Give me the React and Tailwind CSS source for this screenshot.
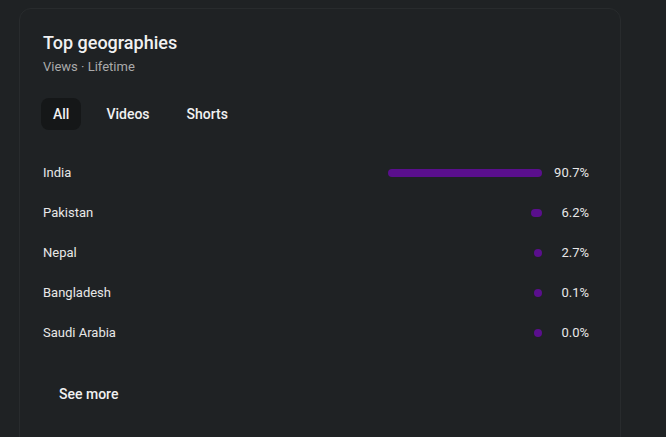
import React from 'react';

const rows = [
  { name: 'India', pct: 90.7 },
  { name: 'Pakistan', pct: 6.2 },
  { name: 'Nepal', pct: 2.7 },
  { name: 'Bangladesh', pct: 0.1 },
  { name: 'Saudi Arabia', pct: 0.0 },
];

export default function App() {
  return (
    <div className="min-h-screen w-full bg-[#1f2224] pt-2 pl-[19px]" style={{ fontFamily: 'Roboto, "Noto Sans", sans-serif' }}>
      <div className="w-[602px] h-[440px] rounded-xl border border-[#282b2d] bg-[#1f2224] pl-[23px] pr-[31px] pt-[22px]">
        {/* Header */}
        <h2 className="text-[18px] leading-6 font-medium text-[#f1f1f1]">Top geographies</h2>
        <p className="mt-0.5 text-[13px] leading-5 text-[#aaaaaa]">Views · Lifetime</p>

        {/* Tabs */}
        <div className="mt-[21px] flex items-center -ml-0.5">
          <button className="h-8 px-3 rounded-lg bg-[#151718] text-[14px] font-medium text-[#f1f1f1]">All</button>
          <button className="h-8 px-3 ml-[13px] text-[14px] font-medium text-[#f1f1f1]">Videos</button>
          <button className="h-8 px-3 ml-[13px] text-[14px] font-medium text-[#f1f1f1]">Shorts</button>
        </div>

        {/* Rows */}
        <div className="mt-[23px] flex flex-col">
          {rows.map((r) => (
            <div key={r.name} className="h-10 flex items-center">
              <span className="flex-1 text-[13px] text-[#e8e8e8]">{r.name}</span>
              <div className="w-[170px] flex justify-end items-center">
                <div
                  className="h-2 rounded-full bg-[#5a0f8d]"
                  style={{ width: Math.max(8, (r.pct * 170) / 100) }}
                />
              </div>
              <span className="w-[47px] text-right text-[13px] text-[#e8e8e8]">{r.pct.toFixed(1)}%</span>
            </div>
          ))}
        </div>

        {/* See more */}
        <button className="mt-[23px] h-9 px-4 rounded-full text-[14px] font-medium text-[#f1f1f1]">See more</button>
      </div>
    </div>
  );
}
